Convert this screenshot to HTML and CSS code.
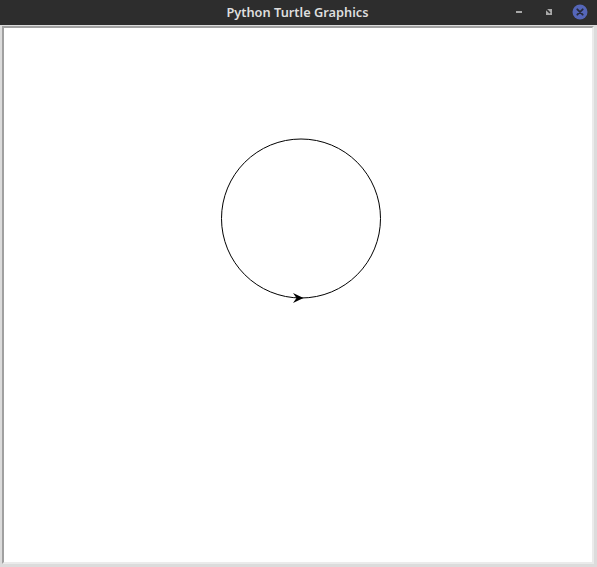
FILE: index.html
```html
<!DOCTYPE html>
<html>
<head>
<meta charset="utf-8">
<title>Python Turtle Graphics</title>
<link rel="stylesheet" href="styles.css">
</head>
<body>
<div class="window">
  <header class="titlebar">
    <span class="title">Python Turtle Graphics</span>
    <div class="controls">
      <svg class="btn-min" width="8" height="4" viewBox="0 0 8 4"><rect x="1" y="1" width="6" height="2" fill="#a8a8a8"/></svg>
      <svg class="btn-max" width="8" height="8" viewBox="0 0 8 8"><rect x="1" y="1" width="6" height="6" fill="#a8a8a8"/><line x1="0.5" y1="0.5" x2="5" y2="5" stroke="#2d2d2d" stroke-width="1.6"/></svg>
      <svg class="btn-close" width="16" height="16" viewBox="0 0 16 16"><circle cx="8" cy="8" r="7.5" fill="#5566b8"/><path d="M5.3 5.3 L10.7 10.7 M10.7 5.3 L5.3 10.7" stroke="#262a3a" stroke-width="1.8" stroke-linecap="round"/></svg>
    </div>
  </header>
  <main class="frame">
    <div class="canvas">
      <svg class="drawing" width="588" height="534" viewBox="0 0 588 534">
        <circle cx="297" cy="190.5" r="79.5" fill="none" stroke="#000" stroke-width="1"/>
        <polygon points="299.5,270 289,265 292.5,270 289,275" fill="#000"/>
      </svg>
    </div>
  </main>
</div>
</body>
</html>
```

FILE: styles.css
```css
html, body {
  margin: 0;
  padding: 0;
  width: 597px;
  height: 567px;
  overflow: hidden;
  background: #dcdcdc;
}

.window {
  display: flex;
  flex-direction: column;
  width: 597px;
  height: 567px;
}

.titlebar {
  position: relative;
  height: 25px;
  flex: 0 0 25px;
  background: #2d2d2d;
  display: flex;
  align-items: center;
  justify-content: center;
}

.title {
  font-family: "Noto Sans", "DejaVu Sans", sans-serif;
  font-weight: 600;
  font-size: 12.8px;
  color: #dedede;
  line-height: 25px;
  padding-right: 2px;
}

.controls {
  position: absolute;
  right: 9px;
  top: 4px;
  display: flex;
  align-items: center;
  height: 16px;
}

.btn-min {
  margin-right: 22px;
  display: block;
}

.btn-max {
  margin-right: 19px;
  display: block;
}

.btn-close {
  display: block;
}

.frame {
  flex: 1;
  padding: 1px 3px 3px 2px;
  background: #dcdcdc;
  display: flex;
}

.canvas {
  flex: 1;
  background: #ffffff;
  border-style: solid;
  border-width: 2px;
  border-color: #a0a0a0 #ebebeb #ebebeb #a0a0a0;
  overflow: hidden;
}

.drawing {
  display: block;
}
```
